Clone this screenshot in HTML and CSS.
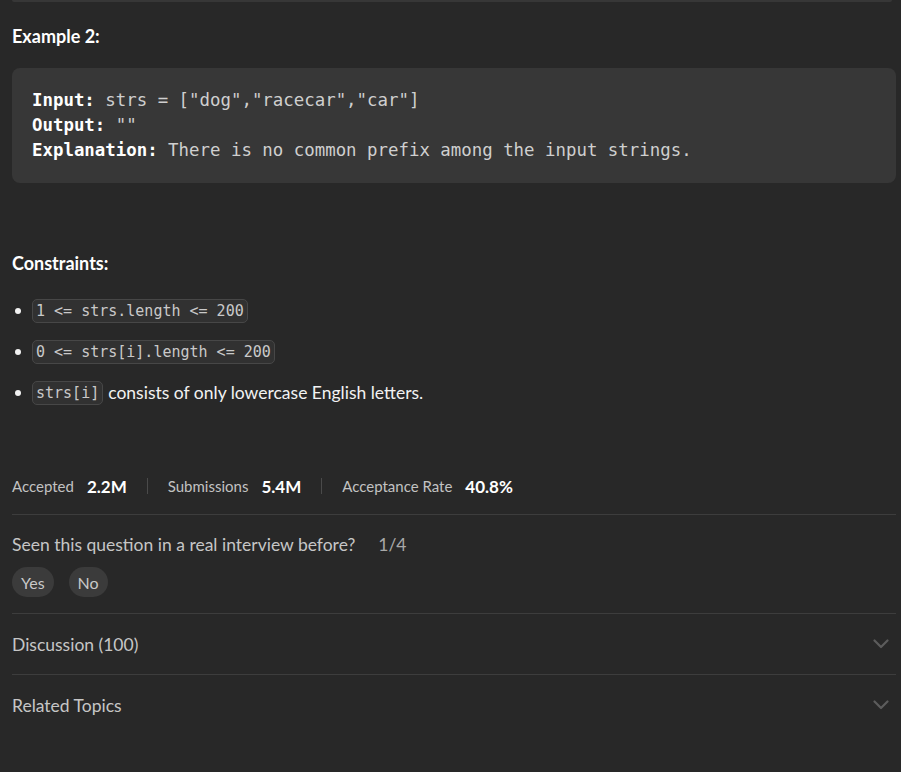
FILE: index.html
```html
<!DOCTYPE html>
<html>
<head>
<meta charset="utf-8">
<link rel="stylesheet" href="styles.css">
</head>
<body>
<div class="page">
  <div class="prev-block"></div>
  <p class="example-title">Example 2:</p>
  <pre class="example"><strong>Input:</strong> strs = ["dog","racecar","car"]
<strong>Output:</strong> ""
<strong>Explanation:</strong> There is no common prefix among the input strings.</pre>

  <p class="section-title">Constraints:</p>
  <ul class="constraints">
    <li><code>1 &lt;= strs.length &lt;= 200</code></li>
    <li><code>0 &lt;= strs[i].length &lt;= 200</code></li>
    <li><code>strs[i]</code> consists of only lowercase English letters.</li>
  </ul>

  <div class="stats">
    <div class="stat"><span class="stat-label">Accepted</span><span class="stat-value">2.2M</span></div>
    <div class="stat-sep"></div>
    <div class="stat"><span class="stat-label">Submissions</span><span class="stat-value">5.4M</span></div>
    <div class="stat-sep"></div>
    <div class="stat"><span class="stat-label">Acceptance Rate</span><span class="stat-value">40.8%</span></div>
  </div>

  <div class="interview">
    <div class="interview-q"><span>Seen this question in a real interview before?</span><span class="interview-count">1/4</span></div>
    <div class="pills">
      <button class="pill">Yes</button>
      <button class="pill">No</button>
    </div>
  </div>

  <div class="accordion">
    <span>Discussion (100)</span>
    <svg class="chevron" viewBox="0 0 16 10" width="16" height="10"><path d="M1.5 1.5 L8 8 L14.5 1.5" fill="none" stroke="currentColor" stroke-width="2.2" stroke-linecap="round" stroke-linejoin="round"/></svg>
  </div>
  <div class="accordion">
    <span>Related Topics</span>
    <svg class="chevron" viewBox="0 0 16 10" width="16" height="10"><path d="M1.5 1.5 L8 8 L14.5 1.5" fill="none" stroke="currentColor" stroke-width="2.2" stroke-linecap="round" stroke-linejoin="round"/></svg>
  </div>
</div>
</body>
</html>
```

FILE: styles.css
```css
html, body {
  margin: 0;
  padding: 0;
  background: #282828;
  height: 100%;
}
body {
  font-family: Lato, "Open Sans", sans-serif;
  color: #eeeeee;
  overflow: hidden;
}
.page {
  padding: 0 5px 0 12px;
}
.prev-block {
  height: 2px;
  margin-right: 4px;
  background: #373737;
  border-radius: 0 0 6px 6px;
}
.example-title, .section-title {
  margin: 0;
  font-weight: 700;
  font-size: 18px;
  color: #ffffff;
}
.example-title {
  margin-top: 23px;
  line-height: 22px;
}
.example {
  margin: 21px 0 0 0;
  padding: 20px 20px 20px 20px;
  background: #373737;
  border-radius: 8px;
  font-family: "DejaVu Sans Mono", monospace;
  font-size: 17.4px;
  line-height: 25px;
  color: #cfcfcf;
  white-space: pre-wrap;
}
.example strong {
  color: #ffffff;
  font-weight: 700;
}
.section-title {
  margin-top: 69px;
  line-height: 22px;
}
.constraints {
  list-style: none;
  margin: 25px 0 0 0;
  padding: 0;
  display: flex;
  flex-direction: column;
  gap: 17px;
}
.constraints li {
  display: flex;
  align-items: center;
  gap: 5px;
  font-size: 17.5px;
  line-height: 24px;
  color: #f2f2f2;
  position: relative;
  padding-left: 20px;
}
.constraints li::before {
  content: "";
  position: absolute;
  left: 3px;
  top: 9px;
  width: 6px;
  height: 6px;
  border-radius: 50%;
  background: #f2f2f2;
}
code {
  font-family: "DejaVu Sans Mono", monospace;
  font-size: 15px;
  line-height: 22px;
  color: #c9c9c9;
  background: #313131;
  border: 1px solid #474747;
  border-radius: 5px;
  padding: 0 3px;
}
.stats {
  margin-top: 69px;
  display: flex;
  align-items: center;
  gap: 20px;
  height: 24px;
}
.stat {
  display: flex;
  align-items: center;
  gap: 13px;
}
.stat-label {
  font-size: 15px;
  color: #c2c2c2;
}
.stat-value {
  font-size: 17px;
  font-weight: 700;
  color: #ffffff;
}
.stat-sep {
  width: 1px;
  height: 16px;
  background: #4a4a4a;
}
.interview {
  margin-top: 16px;
  border-top: 1px solid #3d3d3d;
  padding-top: 19px;
  padding-bottom: 16px;
}
.interview-q {
  display: flex;
  gap: 23px;
  font-size: 17.5px;
  line-height: 22px;
  color: #c6c6c6;
}
.interview-count {
  color: #a8a8a8;
}
.pills {
  margin-top: 11px;
  display: flex;
  gap: 15px;
}
.pill {
  font-family: inherit;
  font-size: 16px;
  color: #c8c8c8;
  background: #3b3b3b;
  border: none;
  border-radius: 15px;
  height: 30px;
  padding: 0 9px;
  cursor: pointer;
}
.accordion {
  border-top: 1px solid #3d3d3d;
  height: 60px;
  display: flex;
  align-items: center;
  justify-content: space-between;
  font-size: 17.5px;
  color: #c6c6c6;
}
.chevron {
  color: #5c5c5c;
  margin-right: 7px;
}
```
